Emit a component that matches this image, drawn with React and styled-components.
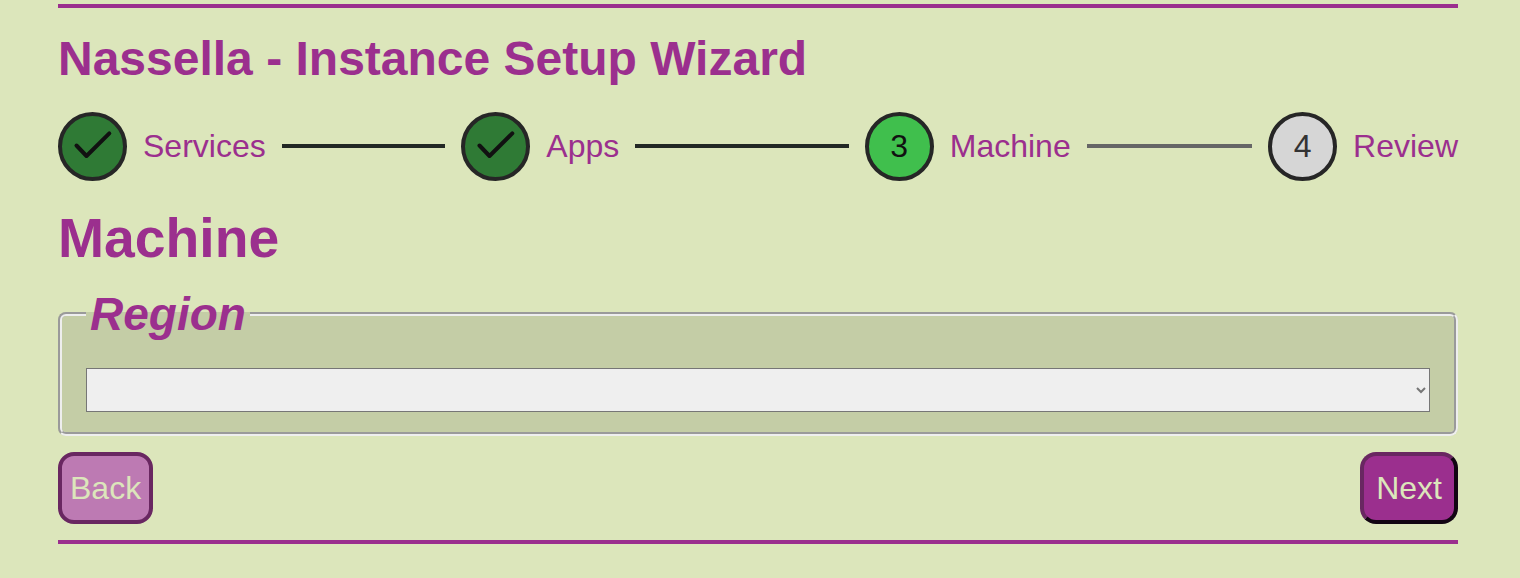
import React from 'react';
import styled, { createGlobalStyle } from 'styled-components';

const Global = createGlobalStyle`
  html, body {
    margin: 0;
    background: #dce6bb;
    font-family: "Liberation Sans", Arial, sans-serif;
  }
`;

const Wizard = styled.main`
  box-sizing: border-box;
  width: 1400px;
  margin: 4px 0 0 58px;
  padding-bottom: 16px;
  border-top: 4px solid #9b2f8e;
  border-bottom: 4px solid #9b2f8e;
`;

const Title = styled.h1`
  margin: 24px 0 26px;
  font-size: 48px;
  line-height: 54px;
  font-weight: 700;
  color: #9b2f8e;
`;

const Stepper = styled.ol`
  display: flex;
  align-items: center;
  gap: 16px;
  margin: 0;
  padding: 0;
  list-style: none;
`;

const Step = styled.li`
  display: flex;
  align-items: center;
  gap: 16px;
  flex: ${({ $last }) => ($last ? '0 0 auto' : '1 1 0')};
`;

const circleColors = {
  done: '#2f7a35',
  current: '#40bf4d',
  todo: '#d6d6d6',
};

const Circle = styled.span`
  box-sizing: border-box;
  display: flex;
  align-items: center;
  justify-content: center;
  flex: none;
  width: 69px;
  height: 69px;
  border: 4px solid #262626;
  border-radius: 50%;
  background: ${({ $state }) => circleColors[$state]};
  font-size: 32px;
  color: ${({ $state }) => ($state === 'todo' ? '#333' : '#111')};
`;

const StepName = styled.span`
  font-size: 32px;
  color: #9b2f8e;
`;

const Connector = styled.span`
  flex: 1;
  height: 4px;
  margin-bottom: 1px;
  background: ${({ $done }) => ($done ? '#222824' : '#666')};
`;

const Heading = styled.h2`
  margin: 25px 0 17px;
  font-size: 55.3px;
  line-height: 64px;
  font-weight: 700;
  color: #9b2f8e;
`;

const Group = styled.fieldset`
  box-sizing: border-box;
  margin: 0;
  padding: 27px 24px 20px;
  border: 4px groove #eee;
  border-radius: 8px;
  background: #c4cda6;
`;

const GroupTitle = styled.legend`
  margin-left: 0;
  padding: 0 4px;
  font-size: 46px;
  font-style: italic;
  font-weight: 700;
  color: #9b2f8e;
`;

const RegionSelect = styled.select`
  display: block;
  box-sizing: border-box;
  width: 100%;
  height: 44px;
  border: 1px solid #767676;
  border-radius: 0;
  background-color: #efefef;
  color: #767676;
  font-size: 16px;
`;

const Actions = styled.div`
  display: flex;
  justify-content: space-between;
  margin-top: 16px;
`;

const NavButton = styled.button`
  box-sizing: border-box;
  height: 72px;
  padding: 0 ${({ disabled }) => (disabled ? '8px' : '12px')};
  border-style: solid;
  border-width: 4px;
  border-color: ${({ disabled }) => (disabled ? '#692761' : '#692761 #120512 #120512 #692761')};
  border-radius: 16px;
  background: ${({ disabled }) => (disabled ? '#bd7ab3' : '#9b2f8e')};
  font-family: inherit;
  font-size: 32px;
  color: #dce6bb;
`;

const Check = () => (
  <svg width="45" height="35" viewBox="0 0 45 35" fill="none" stroke="#111" strokeWidth="4" strokeLinecap="round" strokeLinejoin="round">
    <path d="M6.5 16.5 L16.5 27 L39.3 4.3" />
  </svg>
);

const steps = [
  { name: 'Services', state: 'done' },
  { name: 'Apps', state: 'done' },
  { name: 'Machine', state: 'current', num: 3 },
  { name: 'Review', state: 'todo', num: 4 },
];

const App = () => (
  <Wizard>
    <Global />
    <Title>Nassella - Instance Setup Wizard</Title>
    <Stepper>
      {steps.map((s, i) => (
        <Step key={s.name} $last={i === steps.length - 1}>
          <Circle $state={s.state}>{s.state === 'done' ? <Check /> : s.num}</Circle>
          <StepName>{s.name}</StepName>
          {i < steps.length - 1 && <Connector $done={s.state === 'done'} />}
        </Step>
      ))}
    </Stepper>
    <Heading>Machine</Heading>
    <Group>
      <GroupTitle>Region</GroupTitle>
      <RegionSelect defaultValue="">
        <option value=""></option>
      </RegionSelect>
    </Group>
    <Actions>
      <NavButton disabled>Back</NavButton>
      <NavButton>Next</NavButton>
    </Actions>
  </Wizard>
);

export default App;
